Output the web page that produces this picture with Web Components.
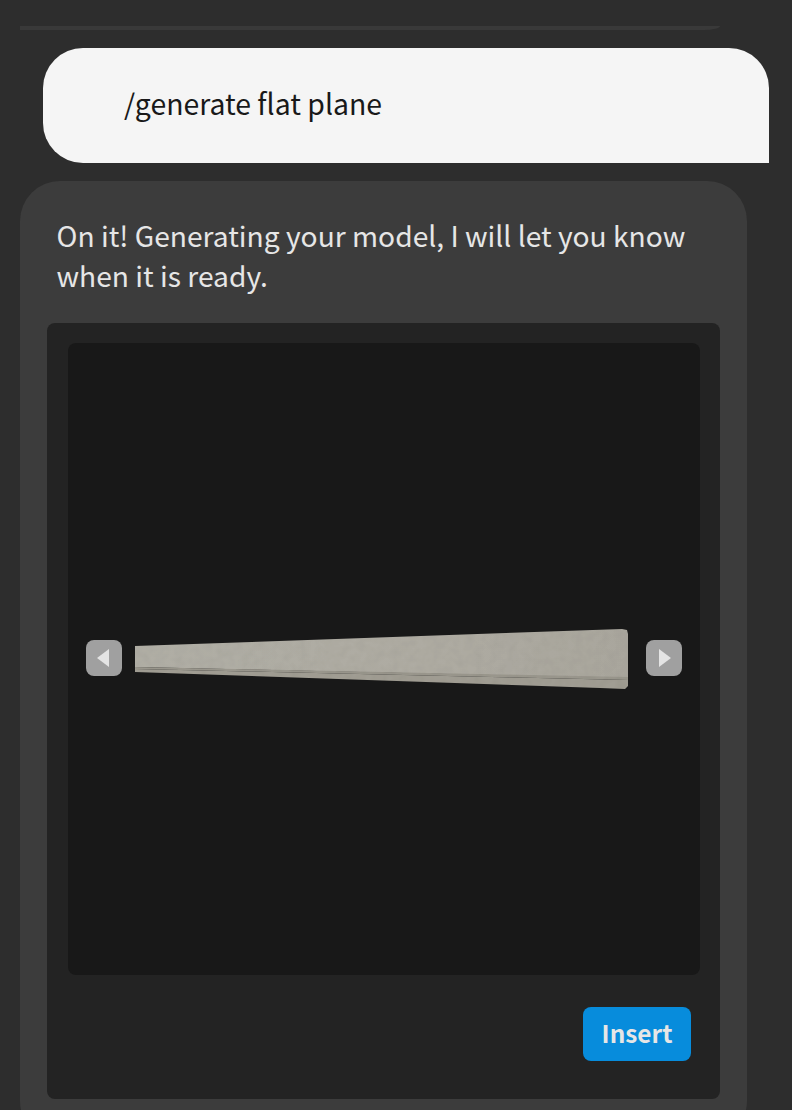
<!DOCTYPE html>
<html>

<head>
    <title>generate chat</title>
    <style>
        html, body { margin: 0; padding: 0; background: #2d2d2d; }
        body { height: 1110px; overflow: hidden; font-family: "Noto Sans CJK JP", "Noto Sans", sans-serif; }
    </style>
</head>

<body>
    <chat-log>
        <user-bubble>/generate flat plane</user-bubble>
        <bot-card>
            On it! Generating your model, I will let you know when it is ready.
            <model-panel slot="panel"></model-panel>
        </bot-card>
    </chat-log>
</body>
<script>
    class ChatLog extends HTMLElement {
        constructor() {
            super();
            this.attachShadow({ mode: 'open' }).innerHTML = `
            <style>
                :host { display: block; padding-top: 26px; }
                #prev {
                    width: 700px;
                    height: 4px;
                    margin-left: 20px;
                    background: #393939;
                    border-radius: 0 0 16px 0 / 0 0 4px 0;
                }
            </style>
            <div id="prev"></div>
            <slot></slot>
            `;
        }
    }
    customElements.define('chat-log', ChatLog);

    class UserBubble extends HTMLElement {
        constructor() {
            super();
            this.attachShadow({ mode: 'open' }).innerHTML = `
            <style>
                :host {
                    display: flex;
                    align-items: center;
                    box-sizing: border-box;
                    width: 726px;
                    height: 115px;
                    margin: 18px 0 0 43px;
                    padding: 0 0 6px 81px;
                    background: #f5f5f5;
                    color: #191919;
                    font-size: 28.4px;
                    border-radius: 40px 40px 0 40px;
                }
            </style>
            <slot></slot>
            `;
        }
    }
    customElements.define('user-bubble', UserBubble);

    class BotCard extends HTMLElement {
        constructor() {
            super();
            this.attachShadow({ mode: 'open' }).innerHTML = `
            <style>
                :host {
                    display: block;
                    box-sizing: border-box;
                    width: 727px;
                    height: 960px;
                    margin: 18px 0 0 20px;
                    padding: 34px 27px 0;
                    background: #3c3c3c;
                    color: #e6e6e6;
                    font-size: 28.2px;
                    line-height: 40px;
                    border-radius: 40px;
                }
                #text { padding: 0 10px 0 9.5px; margin-bottom: 28px; }
            </style>
            <div id="text"><slot></slot></div>
            <slot name="panel"></slot>
            `;
        }
    }
    customElements.define('bot-card', BotCard);

    class ModelPanel extends HTMLElement {
        constructor() {
            super();
            this.attachShadow({ mode: 'open' }).innerHTML = `
            <style>
                :host {
                    display: flex;
                    flex-direction: column;
                    box-sizing: border-box;
                    width: 673px;
                    height: 776px;
                    padding: 20px 20px 38px 21px;
                    background: #232323;
                    border-radius: 8px;
                }
                #viewer {
                    position: relative;
                    height: 632px;
                    background: #181818;
                    border-radius: 8px;
                }
                svg { display: block; }
                #model { position: absolute; left: 0; top: 0; }
                .arrow { position: absolute; top: 297px; }
                #left { left: 18px; }
                #right { left: 578px; }
                #foot { display: flex; justify-content: flex-end; margin-top: 32px; padding-right: 9px; }
                button {
                    width: 108px;
                    height: 54px;
                    padding: 0 0 3px;
                    border: 0;
                    border-radius: 8px;
                    background: #078cdc;
                    color: #e6e6e6;
                    font: 700 24.4px "Noto Sans CJK JP", "Noto Sans", sans-serif;
                }
            </style>
            <div id="viewer">
                <svg id="model" width="632" height="632" viewBox="68 343 632 632">
                    <defs>
                        <linearGradient id="face" x1="0" x2="1" y1="0" y2="0">
                            <stop offset="0" stop-color="#b0aea5" />
                            <stop offset="0.6" stop-color="#aeaba2" />
                            <stop offset="1" stop-color="#a9a69d" />
                        </linearGradient>
                        <filter id="grain" x="0" y="0" width="1" height="1">
                            <feGaussianBlur in="SourceGraphic" stdDeviation="0.7" result="soft" />
                            <feTurbulence type="fractalNoise" baseFrequency="0.12" numOctaves="2" seed="4" result="noise" />
                            <feColorMatrix in="noise" type="matrix" values="0 0 0 0 0  0 0 0 0 0  0 0 0 0 0  0 0 0 0.12 -0.04" result="spots" />
                            <feComposite in="spots" in2="soft" operator="in" result="inside" />
                            <feMerge>
                                <feMergeNode in="soft" />
                                <feMergeNode in="inside" />
                            </feMerge>
                        </filter>
                    </defs>
                    <g filter="url(#grain)">
                        <polygon fill="url(#face)" points="135,646 622,629 627,630 628,634 628,678 135,667" />
                        <polygon fill="#9a978d" points="135,667 628,677 628,680 135,669" />
                        <polygon fill="#a09d93" points="135,669 628,680 628,686 625,689 600,688 135,672" />
                    </g>
                </svg>
                <svg class="arrow" id="left" width="36" height="36" viewBox="0 0 36 36">
                    <rect width="36" height="36" rx="8" fill="#a0a0a0" />
                    <polygon points="11,18 23,9 23,27" fill="#e4e4e4" />
                </svg>
                <svg class="arrow" id="right" width="36" height="36" viewBox="0 0 36 36">
                    <rect width="36" height="36" rx="8" fill="#a0a0a0" />
                    <polygon points="25,18 13,9 13,27" fill="#e4e4e4" />
                </svg>
            </div>
            <div id="foot"><button>Insert</button></div>
            `;
        }
    }
    customElements.define('model-panel', ModelPanel);
</script>

</html>
